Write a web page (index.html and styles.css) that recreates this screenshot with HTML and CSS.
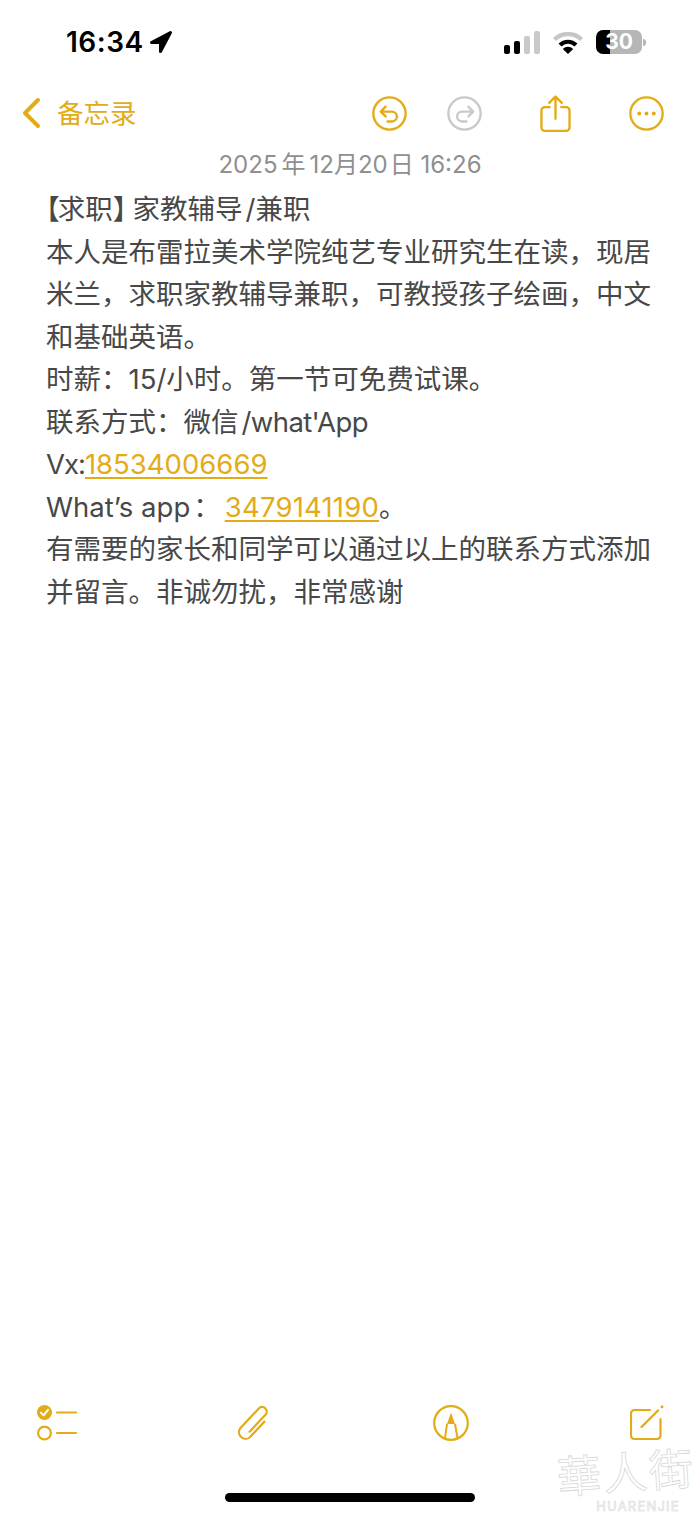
FILE: index.html
```html
<!DOCTYPE html>
<html>
<head>
<meta charset="utf-8">
<title>备忘录</title>
<link rel="stylesheet" href="styles.css">
</head>
<body>

<div class="m_page">

<div class="st_bar">
<div class="st_time">16:34</div>
<svg class="st_loc" width="24" height="24" viewBox="0 0 24 24"><path d="M21.5 2.5 L2.5 12.5 H11.5 V21.5 Z" fill="#000" stroke="#000" stroke-width="3" stroke-linejoin="round"/></svg>
<div class="st_right">
<div class="st_sig"><span class="on s1"></span><span class="on s2"></span><span class="s3"></span><span class="s4"></span></div>
<svg class="st_wifi" width="32" height="24" viewBox="0 0 32 24">
<path d="M2.5 9.5 A19.5 19.5 0 0 1 29.5 9.5" fill="none" stroke="#c6c6c6" stroke-width="4.4"/>
<path d="M8 15 A11.5 11.5 0 0 1 24 15" fill="none" stroke="#000" stroke-width="4.2"/>
<path d="M16 24 L10.8 18.9 A7.4 7.4 0 0 1 21.2 18.9 Z" fill="#000"/>
</svg>
<div class="st_batt">30</div>
<div class="st_nub"></div>
</div>
</div>

<div class="nav_bar">
<svg class="nav_back" width="20" height="32" viewBox="0 0 20 32"><path d="M17 3 L4 16 L17 29" fill="none" stroke="#e3ab16" stroke-width="4" stroke-linecap="round" stroke-linejoin="round"/></svg>
<div class="nav_title">备忘录</div>
<svg class="nav_undo" width="35" height="35" viewBox="0 0 36 36"><g fill="none" stroke="#e3ab16" stroke-width="2.4" stroke-linecap="round" stroke-linejoin="round"><circle cx="18" cy="18" r="16.6"/><path d="M14 11 L9 16 L14 21 M9 16 H20.5 A5.1 5.1 0 0 1 20.5 26.2 H16"/></g></svg>
<svg class="nav_redo" width="35" height="35" viewBox="0 0 36 36"><g fill="none" stroke="#c9c9c9" stroke-width="2.4" stroke-linecap="round" stroke-linejoin="round"><circle cx="18" cy="18" r="16.6"/><path d="M22 11 L27 16 L22 21 M27 16 H15.5 A5.1 5.1 0 0 0 15.5 26.2 H20"/></g></svg>
<svg class="nav_share" width="31" height="39" viewBox="0 0 32 39"><g fill="none" stroke="#e3ab16" stroke-width="2.4" stroke-linecap="round" stroke-linejoin="round"><path d="M10 13 H5 A3.5 3.5 0 0 0 1.5 16.5 V34 A3.5 3.5 0 0 0 5 37.5 H27 A3.5 3.5 0 0 0 30.5 34 V16.5 A3.5 3.5 0 0 0 27 13 H22"/><path d="M16 25 V2 M9.5 8.5 L16 2 L22.5 8.5"/></g></svg>
<svg class="nav_more" width="35" height="35" viewBox="0 0 36 36"><circle cx="18" cy="18" r="16.6" fill="none" stroke="#e3ab16" stroke-width="2.4"/><g fill="#e3ab16"><circle cx="10.5" cy="18" r="2"/><circle cx="18" cy="18" r="2"/><circle cx="25.5" cy="18" r="2"/></g></svg>
</div>

<div class="n_date">2025<span class="sp">年</span>12月20<span class="sp2">日</span> 16:26</div>

<div class="n_body">
<div><span class="halt hl">【</span>求职<span class="halt hr">】</span>家教辅导<span class="sl">/</span>兼职</div>
<div>本人是布雷拉美术学院纯艺专业研究生在读，现居</div>
<div>米兰，求职家教辅导兼职，可教授孩子绘画，中文</div>
<div>和基础英语。</div>
<div>时薪：15/小时。第一节可免费试课。</div>
<div>联系方式：微信<span class="sl tight">/what'App</span></div>
<div><span class="vx">Vx:</span><a class="n_lnk">18534006669</a></div>
<div>What’s app<span class="cl">：</span><a class="n_lnk lnk2">3479141190</a>。</div>
<div>有需要的家长和同学可以通过以上的联系方式添加</div>
<div>并留言。非诚勿扰，非常感谢</div>
</div>

<div class="tb_bar">
<svg width="40" height="37" viewBox="0 0 40 37"><circle cx="7.5" cy="7.5" r="7.5" fill="#e3ab16"/><path d="M4 7.8 L6.6 10.4 L11 4.8" fill="none" stroke="#fff" stroke-width="2" stroke-linecap="round" stroke-linejoin="round"/><circle cx="7.5" cy="28" r="6.4" fill="none" stroke="#e3ab16" stroke-width="2.2"/><path d="M20 7.5 H39 M20 28 H39" stroke="#e3ab16" stroke-width="2.2" stroke-linecap="round"/></svg>
<svg width="33" height="38" viewBox="0 0 34 38"><g transform="rotate(43 17 19)"><path d="M23.5 11 V33 A6.8 6.8 0 0 1 10 33 V5 A4.7 4.7 0 0 1 19.4 5 V29" fill="none" stroke="#e3ab16" stroke-width="2.3" stroke-linecap="round"/></g></svg>
<svg width="36" height="36" viewBox="0 0 36 36"><circle cx="18" cy="18" r="16.8" fill="none" stroke="#e3ab16" stroke-width="2.2"/><path d="M18 7.5 L14 19 H22 Z" fill="#e3ab16"/><path d="M14 19 L12 33 M22 19 L24.5 33" fill="none" stroke="#e3ab16" stroke-width="2"/></svg>
<svg width="34" height="36" viewBox="0 0 34 36"><path d="M20 5 H4.5 A3.5 3.5 0 0 0 1 8.5 V30.5 A3.5 3.5 0 0 0 4.5 34 H27 A3.5 3.5 0 0 0 30.5 30.5 V14" fill="none" stroke="#e3ab16" stroke-width="2.2" stroke-linecap="round"/><path d="M11.5 22 L28 5.5" stroke="#e3ab16" stroke-width="2.4" stroke-linecap="round"/><circle cx="32" cy="1.7" r="1.5" fill="#e3ab16"/></svg>
</div>

<div class="home_ind"></div>

<div class="wm"><div class="wm_cn">華人街</div><div class="wm_en">HUARENJIE</div></div>

</div>

</body>
</html>
```

FILE: styles.css
```css
* {box-sizing:border-box;}
html, body {margin:0;padding:0;background:#fff;}
body {font-family:Inter, "Noto Sans CJK SC", sans-serif;}
svg {display:block;flex:none;}

.m_page {position:relative;width:700px;height:1515px;display:flex;flex-direction:column;overflow:hidden;}

.st_bar {display:flex;align-items:center;height:30px;margin-top:27px;padding:0 54px 0 66px;}
.st_time {font-size:28px;font-weight:600;color:#000;line-height:30px;letter-spacing:.5px;}
.st_loc {margin-left:5px;}
.st_right {display:flex;align-items:center;margin-left:auto;}
.st_sig {display:flex;align-items:flex-end;gap:4px;height:23px;}
.st_sig span {display:block;width:6px;border-radius:2px;background:#c9c9c9;}
.st_sig .on {background:#000;}
.st_sig .s1 {height:9px;}
.st_sig .s2 {height:13px;}
.st_sig .s3 {height:18px;}
.st_sig .s4 {height:23px;}
.st_wifi {margin-left:12px;}
.st_batt {width:46px;height:24px;margin-left:12px;border-radius:7px;background:linear-gradient(90deg, #000 14px, #b6b6b6 14px);color:#fff;font-size:21px;font-weight:700;line-height:24px;text-align:center;}
.st_nub {width:3px;height:7px;margin-left:1px;border-radius:0 3px 3px 0;background:#b6b6b6;}

.nav_bar {display:flex;align-items:center;height:40px;margin-top:36px;padding-left:21px;}
.nav_title {margin-left:16px;color:#e3ab16;font-size:26.5px;line-height:40px;}
.nav_undo {margin-left:auto;}
.nav_redo {margin-left:40px;}
.nav_share {margin-left:58px;}
.nav_more {margin-left:58px;margin-right:36px;}

.n_date {margin-top:17px;height:30px;line-height:30px;text-align:center;color:#8f8f8f;font-size:24px;}
.n_date .sp {margin:0 4px;}
.n_date .sp2 {margin-left:2px;}

.n_body {margin-top:8px;padding:0 20px 0 46px;color:#484848;font-size:27.5px;line-height:42.55px;white-space:nowrap;}
.n_lnk {color:#e3ab16;text-decoration:underline;text-decoration-thickness:1.5px;text-underline-offset:3px;}
.lnk2 {margin-left:4px;letter-spacing:.2px;}
.halt {font-feature-settings:"halt";}
.hl {letter-spacing:-2px;}
.hr {margin-right:6px;}
.sl {margin-left:3px;}
.tight {letter-spacing:-.6px;}
.vx {letter-spacing:-1px;}
.cl {margin-left:3px;}

.tb_bar {display:flex;justify-content:space-between;align-items:center;margin-top:auto;padding:0 36px 0 37px;}
.home_ind {width:250px;height:9px;margin:51px auto 13px auto;border-radius:5px;background:#000;}

.wm {position:absolute;left:556px;top:1448px;width:140px;color:#fff;text-align:center;white-space:nowrap;}
.wm_cn {font-size:44px;line-height:50px;letter-spacing:2px;-webkit-text-stroke:.8px #d8d8d8;transform:rotate(-4deg);}
.wm_en {margin-top:1px;padding-left:24px;font-size:13px;line-height:14px;letter-spacing:1.2px;-webkit-text-stroke:.6px #d8d8d8;}
```
